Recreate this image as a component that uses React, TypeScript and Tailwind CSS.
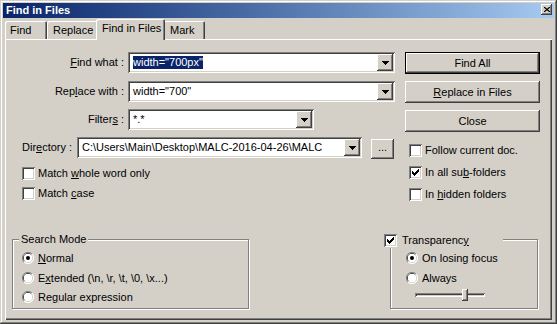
import React from "react";

const raised =
  "shadow-[inset_-1px_-1px_0_#404040,inset_1px_1px_0_#ffffff,inset_-2px_-2px_0_#808080,inset_2px_2px_0_#d4d0c8]";
const sunken =
  "shadow-[inset_1px_1px_0_#808080,inset_-1px_-1px_0_#ffffff,inset_2px_2px_0_#404040,inset_-2px_-2px_0_#d4d0c8]";

function Arrow() {
  return (
    <svg width="7" height="4" viewBox="0 0 7 4">
      <path d="M0 0H7V1H6V2H5V3H4V4H3V3H2V2H1V1H0Z" fill="#000" />
    </svg>
  );
}

function Combo({
  className,
  children,
}: {
  className: string;
  children: React.ReactNode;
}) {
  return (
    <div className={`h-[21px] bg-white flex p-[2px] ${sunken} ${className}`}>
      <div className="flex-1 flex items-center pl-[3px] overflow-hidden whitespace-nowrap">
        {children}
      </div>
      <div
        className={`w-[16px] bg-[#d4d0c8] flex items-center justify-center ${raised}`}
      >
        <Arrow />
      </div>
    </div>
  );
}

function Btn({
  className,
  def,
  children,
}: {
  className: string;
  def?: boolean;
  children: React.ReactNode;
}) {
  return (
    <div className={`${className} ${def ? "border border-black" : ""} flex`}>
      <div
        className={`flex-1 flex items-center justify-center ${raised}`}
      >
        {children}
      </div>
    </div>
  );
}

function Check({ checked }: { checked?: boolean }) {
  return (
    <div
      className={`w-[13px] h-[13px] shrink-0 bg-white flex items-center justify-center ${sunken}`}
    >
      {checked && (
        <svg width="7" height="7" viewBox="0 0 7 7">
          <path
            d="M6 0H7V3H6V4H5V5H4V6H3V7H2V6H1V5H0V2H1V3H2V4H3V3H4V2H5V1H6Z"
            fill="#000"
          />
        </svg>
      )}
    </div>
  );
}

function Radio({ checked }: { checked?: boolean }) {
  return (
    <svg width="12" height="12" viewBox="0 0 12 12" className="shrink-0">
      <circle cx="6" cy="6" r="5.5" fill="#ffffff" />
      <path d="M10 2A5.5 5.5 0 0 0 2 10" stroke="#808080" fill="none" strokeWidth="1" />
      <path d="M9.3 2.7A4.5 4.5 0 0 0 2.7 9.3" stroke="#404040" fill="none" strokeWidth="1" />
      <path d="M2 10A5.5 5.5 0 0 0 10 2" stroke="#ffffff" fill="none" strokeWidth="1" />
      <path d="M2.7 9.3A4.5 4.5 0 0 0 9.3 2.7" stroke="#d4d0c8" fill="none" strokeWidth="1" />
      <circle cx="6" cy="6" r="4" fill="#ffffff" />
      {checked && <circle cx="6" cy="6" r="2" fill="#000" />}
    </svg>
  );
}

function CheckRow({
  checked,
  children,
  className,
}: {
  checked?: boolean;
  children: React.ReactNode;
  className: string;
}) {
  return (
    <div className={`flex items-center h-[13px] ${className}`}>
      <Check checked={checked} />
      <span className="ml-[3px] whitespace-nowrap">{children}</span>
    </div>
  );
}

function RadioRow({
  checked,
  children,
  className,
}: {
  checked?: boolean;
  children: React.ReactNode;
  className: string;
}) {
  return (
    <div className={`flex items-center h-[12px] ${className}`}>
      <Radio checked={checked} />
      <span className="ml-[4px] whitespace-nowrap">{children}</span>
    </div>
  );
}

export default function App() {
  return (
    <div
      className={`w-[557px] h-[324px] bg-[#d4d0c8] p-[3px] flex flex-col text-[11px] leading-[13px] text-black font-['Liberation_Sans',Arial,sans-serif] shadow-[inset_-1px_-1px_0_#404040,inset_1px_1px_0_#d4d0c8,inset_-2px_-2px_0_#808080,inset_2px_2px_0_#ffffff]`}
    >
      {/* Title bar */}
      <div className="h-[15px] shrink-0 bg-linear-to-r from-[#0a246a] to-[#a6caf0] flex items-start justify-between">
        <span className="pl-[3px] pt-[1px] text-white font-bold text-[11px] leading-[13px]">
          Find in Files
        </span>
        <div
          className={`mt-[1px] mr-[2px] w-[11px] h-[11px] bg-[#d4d0c8] flex items-center justify-center ${raised}`}
        >
          <svg width="6" height="5" viewBox="0 0 6 5">
            <path d="M0 0L6 5M6 0L0 5" stroke="#000" strokeWidth="1.2" />
          </svg>
        </div>
      </div>

      {/* Tabs */}
      <div className="h-[21px] shrink-0 flex items-end pl-[2px]">
        <div className="w-[42px] h-[18px] pl-[5px] pt-[3px] rounded-t-[2px] shadow-[inset_1px_1px_0_#ffffff,inset_-1px_0_0_#404040,inset_-2px_0_0_#808080]">
          Find
        </div>
        <div className="w-[51px] h-[18px] pl-[6px] pt-[3px] rounded-t-[2px] shadow-[inset_1px_1px_0_#ffffff,inset_-1px_0_0_#404040,inset_-2px_0_0_#808080]">
          Replace
        </div>
        <div className="relative z-10 -mx-[2px] -mb-[1px] w-[69px] h-[21px] pl-[6px] pt-[3px] bg-[#d4d0c8] rounded-t-[2px] shadow-[inset_1px_1px_0_#ffffff,inset_-1px_0_0_#404040,inset_-2px_0_0_#808080]">
          Find in Files
        </div>
        <div className="w-[42px] h-[18px] pl-[7px] pt-[3px] rounded-t-[2px] shadow-[inset_1px_1px_0_#ffffff,inset_-1px_0_0_#404040,inset_-2px_0_0_#808080]">
          Mark
        </div>
      </div>

      {/* Panel */}
      <div className="flex-1 mx-[2px] mb-[1px] flex flex-col shadow-[inset_1px_1px_0_#ffffff,inset_-1px_-1px_0_#404040,inset_-2px_-2px_0_#808080]">
        <div className="flex mt-[13px] h-[149px]">
          {/* Left column */}
          <div className="w-[391px] flex flex-col">
            <div className="flex items-center h-[21px]">
              <div className="w-[123px] text-right pr-[4px]">
                <span className="underline">F</span>ind what :
              </div>
              <Combo className="w-[267px]">
                <span className="bg-[#0a246a] text-white">width="700px"</span>
              </Combo>
            </div>
            <div className="flex items-center h-[21px] mt-[8px]">
              <div className="w-[123px] text-right pr-[4px]">
                Rep<span className="underline">l</span>ace with :
              </div>
              <Combo className="w-[267px]">width="700"</Combo>
            </div>
            <div className="flex items-center h-[21px] mt-[7px]">
              <div className="w-[123px] text-right pr-[4px]">
                Filter<span className="underline">s</span> :
              </div>
              <Combo className="w-[186px]">*.*</Combo>
            </div>
            <div className="flex items-center h-[21px] mt-[7px]">
              <div className="w-[72px] pl-[17px] whitespace-nowrap">
                Dir<span className="underline">e</span>ctory :
              </div>
              <Combo className="w-[285px]">
                C:\Users\Main\Desktop\MALC-2016-04-26\MALC
              </Combo>
              <Btn className="ml-[9px] w-[23px] h-[20px] mt-[2px]">
                <span className="-mt-[2px]">...</span>
              </Btn>
            </div>
            <CheckRow className="mt-[9px] ml-[17px]">
              Match <span className="underline">w</span>hole word only
            </CheckRow>
            <CheckRow className="mt-[7px] ml-[17px]">
              Match <span className="underline">c</span>ase
            </CheckRow>
          </div>

          {/* Right column */}
          <div className="ml-[9px] w-[135px] flex flex-col">
            <Btn def className="h-[22px]">
              Find All
            </Btn>
            <Btn className="h-[22px] mt-[7px]">
              <span>
                <span className="underline">R</span>eplace in Files
              </span>
            </Btn>
            <Btn className="h-[22px] mt-[7px]">Close</Btn>
            <CheckRow className="mt-[12px] ml-[4px]">Follow current doc.</CheckRow>
            <CheckRow checked className="mt-[9px] ml-[4px]">
              In all su<span className="underline">b</span>-folders
            </CheckRow>
            <CheckRow className="mt-[9px] ml-[4px]">
              In <span className="underline">h</span>idden folders
            </CheckRow>
          </div>
        </div>

        {/* Bottom groups */}
        <div className="flex mt-[38px]">
          <div className="relative ml-[7px] w-[237px] h-[70px] border border-[#808080] shadow-[inset_1px_1px_0_#ffffff,1px_1px_0_#ffffff] flex flex-col pl-[9px] pt-[12px]">
            <div className="absolute left-[6px] -top-[7px] px-[2px] bg-[#d4d0c8]">
              Search Mode
            </div>
            <RadioRow checked className="">
              <span className="underline">N</span>ormal
            </RadioRow>
            <RadioRow className="mt-[8px]">
              E<span className="underline">x</span>tended (\n, \r, \t, \0, \x...)
            </RadioRow>
            <RadioRow className="mt-[7px]">
              Re<span className="underline">g</span>ular expression
            </RadioRow>
          </div>

          <div className="relative ml-[141px] w-[148px] h-[70px] border border-[#808080] shadow-[inset_1px_1px_0_#ffffff,1px_1px_0_#ffffff] flex flex-col pl-[15px] pt-[12px]">
            <div className="absolute -left-[7px] -top-[6px] w-[119px] h-[14px] bg-[#d4d0c8] flex items-start">
              <Check checked />
              <span className="ml-[5px]">
                Transparenc<span className="underline">y</span>
              </span>
            </div>
            <RadioRow checked className="">
              On losing focus
            </RadioRow>
            <RadioRow className="mt-[8px]">Always</RadioRow>
            <div className="relative ml-[9px] mt-[5px] w-[70px] h-[12px]">
              <div className="absolute left-0 right-0 top-[4px] h-[4px] shadow-[inset_1px_1px_0_#808080,inset_-1px_-1px_0_#ffffff,inset_2px_2px_0_#404040]" />
              <div
                className={`absolute left-[47px] top-0 w-[6px] h-[12px] bg-[#d4d0c8] ${raised}`}
              />
            </div>
          </div>
        </div>
      </div>
    </div>
  );
}
